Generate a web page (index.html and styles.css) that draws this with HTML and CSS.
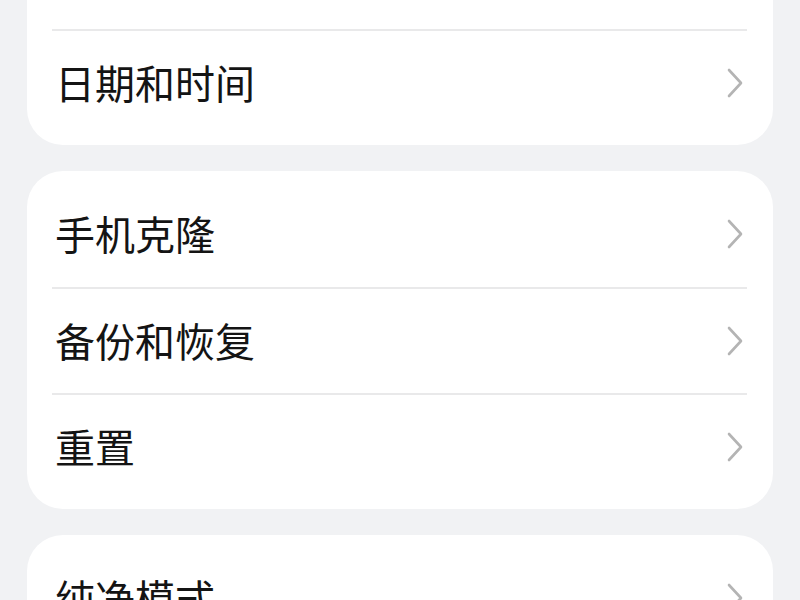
FILE: index.html
```html
<!DOCTYPE html>
<html lang="zh-CN">
<head>
<meta charset="utf-8">
<title>设置</title>
<link rel="stylesheet" href="styles.css">
</head>
<body>
<main class="page">
  <section class="card">
    <div class="row"><span class="label"></span></div>
    <div class="row">
      <span class="label">日期和时间</span>
      <svg class="chev" viewBox="0 0 16 30" aria-hidden="true"><polyline points="2,2 14,15 2,28"/></svg>
    </div>
  </section>
  <section class="card">
    <div class="row">
      <span class="label">手机克隆</span>
      <svg class="chev" viewBox="0 0 16 30" aria-hidden="true"><polyline points="2,2 14,15 2,28"/></svg>
    </div>
    <div class="row">
      <span class="label">备份和恢复</span>
      <svg class="chev" viewBox="0 0 16 30" aria-hidden="true"><polyline points="2,2 14,15 2,28"/></svg>
    </div>
    <div class="row">
      <span class="label">重置</span>
      <svg class="chev" viewBox="0 0 16 30" aria-hidden="true"><polyline points="2,2 14,15 2,28"/></svg>
    </div>
  </section>
  <section class="card">
    <div class="row">
      <span class="label">纯净模式</span>
      <svg class="chev" viewBox="0 0 16 30" aria-hidden="true"><polyline points="2,2 14,15 2,28"/></svg>
    </div>
  </section>
</main>
</body>
</html>
```
FILE: styles.css
```css
html, body {
  margin: 0;
  padding: 0;
  background: #f1f2f4;
  overflow: hidden;
}
.page {
  margin-top: -87px;
  padding: 0 27px;
  display: flex;
  flex-direction: column;
  gap: 26px;
  font-family: "Noto Sans CJK SC", "Noto Sans", sans-serif;
}
.card {
  background: #ffffff;
  border-radius: 36px;
  padding: 10px 0;
}
.row {
  height: 106px;
  margin: 0 26px 0 25px;
  padding: 0 4px 0 3px;
  display: flex;
  align-items: center;
  justify-content: space-between;
  box-sizing: border-box;
}
.row + .row {
  border-top: 2px solid #e9e9ea;
}
.label {
  font-size: 40px;
  line-height: 1;
  color: #141414;
  margin-top: -2px;
}
.chev {
  width: 16px;
  height: 30px;
  fill: none;
  stroke: #b4b4b4;
  stroke-width: 2.6;
  stroke-linecap: round;
  stroke-linejoin: round;
}
```
